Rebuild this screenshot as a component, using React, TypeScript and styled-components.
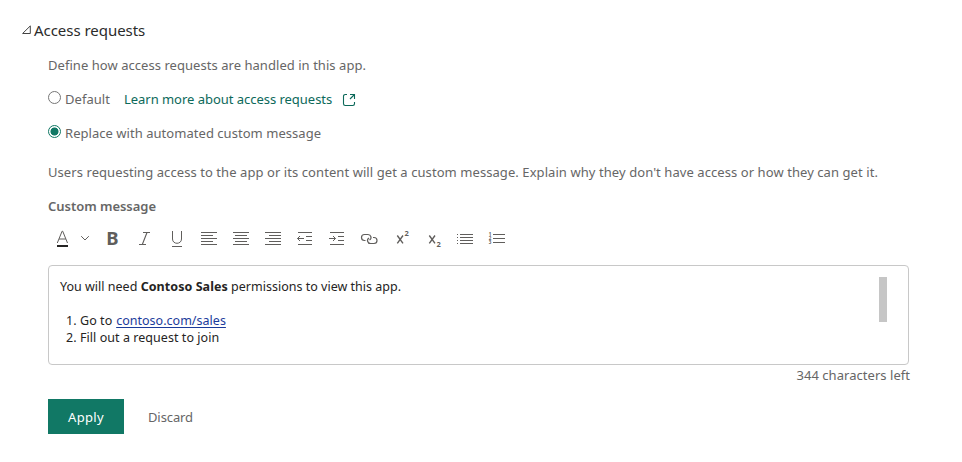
import React from 'react';
import styled, { createGlobalStyle } from 'styled-components';

const GlobalStyle = createGlobalStyle`
  body {
    margin: 0;
    background: #fff;
    color: #666;
    font: 13px/20px 'Noto Sans', 'Open Sans', sans-serif;
  }
`;

const Page = styled.main`
  box-sizing: border-box;
  width: 962px;
  height: 462px;
  padding: 20px 53px 0 21px;
`;

const Header = styled.header`
  display: flex;
  align-items: flex-start;
  gap: 2px;
  height: 35px;

  svg {
    margin-top: 5px;
  }
`;

const Title = styled.h2`
  margin: 0;
  font-size: 15px;
  font-weight: 400;
  line-height: 20px;
  letter-spacing: -0.04px;
  color: #2b2b2b;
`;

const Body = styled.section`
  margin-left: 27px;
`;

const Text = styled.p<{ $tracking?: number; $gap?: number }>`
  margin: 0 0 ${(p) => p.$gap ?? 14}px;
  white-space: nowrap;
  letter-spacing: ${(p) => p.$tracking ?? 0}px;
`;

const Label = styled(Text)`
  font-weight: 600;
  letter-spacing: -0.03px;
`;

const OptionRow = styled.div<{ $gap: number }>`
  display: flex;
  align-items: flex-start;
  height: 20px;
  margin-bottom: ${(p) => p.$gap}px;
`;

const Option = styled.label`
  display: flex;
  gap: 4px;
  white-space: nowrap;
  letter-spacing: 0.04px;
`;

const Radio = styled.span<{ $checked?: boolean }>`
  box-sizing: border-box;
  width: 13px;
  height: 13px;
  margin-top: 2px;
  border: 1px solid ${(p) => (p.$checked ? '#117865' : '#767676')};
  border-radius: 50%;
  background: ${(p) =>
    p.$checked ? 'radial-gradient(circle, #117865 3.6px, transparent 4.4px)' : 'transparent'};
`;

const LearnLink = styled.a`
  display: flex;
  gap: 10px;
  margin-left: 14px;
  color: #0c695a;
  white-space: nowrap;
  letter-spacing: -0.03px;

  svg {
    margin-top: 4px;
  }
`;

const Toolbar = styled.div`
  display: flex;
  height: 32px;
  margin: 7px 0 10px -1px;
`;

const Tool = styled.span<{ $width?: number }>`
  flex: 0 0 ${(p) => p.$width ?? 32}px;
  height: 32px;
`;

const Editor = styled.div`
  display: flex;
  justify-content: space-between;
  box-sizing: border-box;
  width: 861px;
  height: 100px;
  padding: 11px 21px 11px 11px;
  border: 1px solid #c8c8c8;
  border-radius: 4px;
  color: #252423;
  font-size: 12.5px;
  line-height: 17px;
  white-space: nowrap;
`;

const Paragraph = styled.p`
  margin: 1px 0 17px;
  letter-spacing: 0.01px;

  strong {
    font-weight: 700;
    letter-spacing: 0.06px;
  }
`;

const Steps = styled.ol`
  margin: 0;
  padding-left: 20px;
  letter-spacing: 0.05px;

  a {
    margin-left: 0.6px;
    color: #1b3b9b;
    letter-spacing: 0.02px;
    text-decoration: underline;
    text-underline-offset: 2px;
  }
`;

const ScrollThumb = styled.span`
  width: 8px;
  height: 45px;
  background: #c6c6c6;
`;

const Counter = styled.div`
  width: 862px;
  height: 34px;
  text-align: right;
  letter-spacing: 0.04px;
`;

const Actions = styled.div`
  display: flex;
  gap: 4px;
`;

const Button = styled.button<{ $primary?: boolean }>`
  height: 35px;
  padding: 1px 20px 0;
  border: 0;
  background: ${(p) => (p.$primary ? '#117865' : 'transparent')};
  color: ${(p) => (p.$primary ? '#fff' : '#666')};
  font: inherit;
  letter-spacing: ${(p) => (p.$primary ? 0.34 : -0.1)}px;
`;

function Glyph({ children, width = 32 }: { children: React.ReactNode; width?: number }) {
  return (
    <Tool $width={width}>
      <svg width={width} height="32" viewBox={`0 0 ${width} 32`} fill="none" stroke="#605e5c">
        {children}
      </svg>
    </Tool>
  );
}

const SANS = "'Noto Sans', sans-serif";

export default function App() {
  return (
    <>
      <GlobalStyle />
      <Page>
        <Header>
          <svg width="11" height="10" viewBox="0 0 11 10" fill="none" stroke="#444">
            <path d="M1.6 8.5 L9.3 .9 V8.5 Z" />
          </svg>
          <Title>Access requests</Title>
        </Header>
        <Body>
          <Text $tracking={0.046}>Define how access requests are handled in this app.</Text>
          <OptionRow $gap={14}>
            <Option>
              <Radio />
              Default
            </Option>
            <LearnLink>
              Learn more about access requests
              <svg width="14" height="14" viewBox="0 0 14 14" fill="none" stroke="#0c695a" strokeWidth="1.1">
                <path d="M5 1.5H3.2A1.7 1.7 0 0 0 1.5 3.2V10.8A1.7 1.7 0 0 0 3.2 12.5H10.8A1.7 1.7 0 0 0 12.5 10.8V9M8 1.5H12.5V6M12.5 1.5L8 6" />
              </svg>
            </LearnLink>
          </OptionRow>
          <OptionRow $gap={19}>
            <Option>
              <Radio $checked />
              Replace with automated custom message
            </Option>
          </OptionRow>
          <Text $tracking={0.072}>
            Users requesting access to the app or its content will get a custom message. Explain why they don't have access or how they can get it.
          </Text>
          <Label $gap={0}>Custom message</Label>
          <Toolbar>
            <Glyph>
              <path d="M10.3 20L15.1 8.2H15.7L20.5 20M12 16H18.8" />
              <path d="M10 23H21" stroke="#252423" strokeWidth="2" />
            </Glyph>
            <Glyph width={16}>
              <path d="M2.2 13.2L6 17L9.8 13.2" />
            </Glyph>
            <Glyph>
              <text x="11.3" y="22" fill="#605e5c" stroke="none" fontFamily={SANS} fontSize="18.5" fontWeight="700">B</text>
            </Glyph>
            <Glyph>
              <path d="M16 9.5H23M12 21.5H19M20 9.5L15.3 21.5" strokeWidth="1.1" />
            </Glyph>
            <Glyph>
              <path d="M13.5 8V16C13.5 21.7 22.5 21.7 22.5 16V8M13 23.5H23" />
            </Glyph>
            <Glyph>
              <path d="M10 9.5H26M10 12.5H22M10 15.5H26M10 18.5H22M10 21.5H26" />
            </Glyph>
            <Glyph>
              <path d="M10 9.5H26M12 12.5H24M10 15.5H26M12 18.5H24M10 21.5H26" />
            </Glyph>
            <Glyph>
              <path d="M10 9.5H26M14 12.5H26M10 15.5H26M14 18.5H26M10 21.5H26" />
            </Glyph>
            <Glyph>
              <path d="M11 9.5H25M19 13.5H25M19 17.5H25M11 21.5H25M10.5 15.5H17M13 13L10.5 15.5L13 18" />
            </Glyph>
            <Glyph>
              <path d="M11 9.5H25M19 13.5H25M19 17.5H25M11 21.5H25M10 15.5H16.5M14 13L16.5 15.5L14 18" />
            </Glyph>
            <Glyph>
              <path
                d="M14.5 17.5H13.5A3 3 0 0 1 13.5 11.5H17A3 3 0 0 1 18.5 17.1M22 14.5H23A3 3 0 0 1 23 20.5H19.5A3 3 0 0 1 18 14.9"
                strokeWidth="1.2"
              />
            </Glyph>
            <Glyph>
              <path d="M14.3 12.5L20 20.3M20 12.5L14.3 20.3" strokeWidth="1.4" />
              <text x="21.5" y="13" fill="#605e5c" stroke="none" fontFamily={SANS} fontSize="7.5" fontWeight="700">2</text>
            </Glyph>
            <Glyph>
              <path d="M14.3 12.5L20 20.3M20 12.5L14.3 20.3" strokeWidth="1.4" />
              <text x="21.5" y="24" fill="#605e5c" stroke="none" fontFamily={SANS} fontSize="7.5" fontWeight="700">2</text>
            </Glyph>
            <Glyph>
              <path d="M13 11.5H26M13 14.5H26M13 17.5H26M13 20.5H26M10 11.5H11M10 14.5H11M10 17.5H11M10 20.5H11" />
            </Glyph>
            <Glyph>
              <path d="M14 11.5H26M14 15.5H26M14 19.5H26" />
              <g fill="#605e5c" stroke="none" fontFamily={SANS} fontSize="4.5" fontWeight="700">
                <text x="9.7" y="13">1</text>
                <text x="9.7" y="17.2">2</text>
                <text x="9.7" y="21.4">3</text>
              </g>
            </Glyph>
          </Toolbar>
          <Editor>
            <div>
              <Paragraph>
                You will need <strong>Contoso Sales</strong> permissions to view this app.
              </Paragraph>
              <Steps>
                <li>
                  Go to <a>contoso.com/sales</a>
                </li>
                <li>Fill out a request to join</li>
              </Steps>
            </div>
            <ScrollThumb />
          </Editor>
          <Counter>344 characters left</Counter>
          <Actions>
            <Button $primary>Apply</Button>
            <Button>Discard</Button>
          </Actions>
        </Body>
      </Page>
    </>
  );
}
